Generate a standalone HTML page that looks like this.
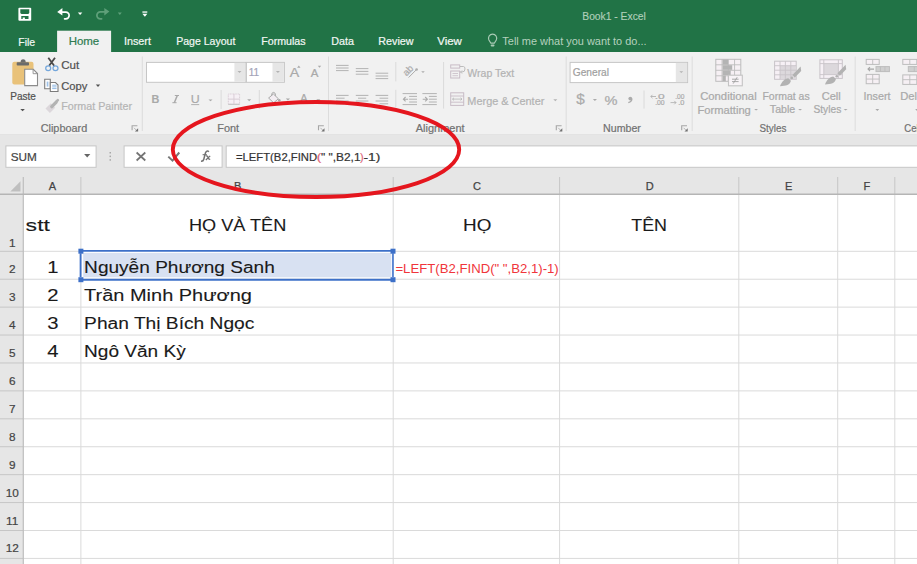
<!DOCTYPE html>
<html><head><meta charset="utf-8"><style>
html,body{margin:0;padding:0;width:917px;height:564px;overflow:hidden;background:#fff}
svg{display:block}
text{font-family:"Liberation Sans",sans-serif;white-space:pre}
</style></head><body>
<svg width="917" height="564" viewBox="0 0 917 564">
<rect x="0" y="0" width="917" height="52" fill="#217346" />
<rect x="57.1" y="30.7" width="54" height="21.3" fill="#f1f1f1" />
<text x="582.28" y="19.5" font-size="11.6" fill="#b0cfba" font-weight="normal" textLength="63.54" lengthAdjust="spacingAndGlyphs" stroke="#b0cfba" stroke-width="0.15" >Book1 - Excel</text>
<text x="18.25" y="46.0" font-size="10.9" fill="#f2f7f4" font-weight="normal" textLength="16.91" lengthAdjust="spacingAndGlyphs" stroke="#f2f7f4" stroke-width="0.2" >File</text>
<text x="123.95" y="44.7" font-size="10.9" fill="#f2f7f4" font-weight="normal" textLength="27.01" lengthAdjust="spacingAndGlyphs" stroke="#f2f7f4" stroke-width="0.2" >Insert</text>
<text x="176.15" y="44.7" font-size="10.9" fill="#f2f7f4" font-weight="normal" textLength="59.21" lengthAdjust="spacingAndGlyphs" stroke="#f2f7f4" stroke-width="0.2" >Page Layout</text>
<text x="261.25" y="44.7" font-size="10.9" fill="#f2f7f4" font-weight="normal" textLength="44.31" lengthAdjust="spacingAndGlyphs" stroke="#f2f7f4" stroke-width="0.2" >Formulas</text>
<text x="331.25" y="44.7" font-size="10.9" fill="#f2f7f4" font-weight="normal" textLength="22.71" lengthAdjust="spacingAndGlyphs" stroke="#f2f7f4" stroke-width="0.2" >Data</text>
<text x="378.35" y="44.7" font-size="10.9" fill="#f2f7f4" font-weight="normal" textLength="35.21" lengthAdjust="spacingAndGlyphs" stroke="#f2f7f4" stroke-width="0.2" >Review</text>
<text x="437.25" y="44.7" font-size="10.9" fill="#f2f7f4" font-weight="normal" textLength="24.61" lengthAdjust="spacingAndGlyphs" stroke="#f2f7f4" stroke-width="0.2" >View</text>
<text x="68.65" y="44.7" font-size="10.9" fill="#2f7c51" font-weight="normal" textLength="30.61" lengthAdjust="spacingAndGlyphs" stroke="#2f7c51" stroke-width="0.2" >Home</text>
<text x="502.35" y="44.7" font-size="10.9" fill="#b5d1be" font-weight="normal" textLength="144.21" lengthAdjust="spacingAndGlyphs" >Tell me what you want to do...</text>
<path d="M490.9,43.2 L488.9,40 A4.1,4.1 0 1 1 496.3,40 L494.3,43.2 Z" fill="none" stroke="#a9cbb5" stroke-width="1.2" stroke-linejoin="round"/>
<rect x="490.7" y="44.5" width="3.8" height="1.9" fill="#a9cbb5" rx="0.8"/>
<path d="M18.4,8.7 Q18.4,7.7 19.4,7.7 H30.2 Q31.2,7.7 31.2,8.7 V19.7 Q31.2,20.7 30.2,20.7 H19.4 Q18.4,20.7 18.4,19.7 Z" fill="#ffffff" stroke="none" stroke-width="1" />
<path d="M20.3,9.3 H29.3 V12.6 Q29.3,13.9 28,13.9 H21.6 Q20.3,13.9 20.3,12.6 Z" fill="#217346" stroke="none" stroke-width="1" />
<path d="M21.3,16.1 H28.5 V19.1 H24.9 V17.6 H22.7 V19.1 H21.3 Z" fill="#217346" stroke="none" stroke-width="1" />
<path d="M57.2,11.9 L62.4,7.9 L62.4,15.6 Z" fill="#ffffff" stroke="none" stroke-width="1" />
<path d="M61.5,12.1 H65.8 A3.35,3.35 0 0 1 65.8,18.8 H64.6" fill="none" stroke="#ffffff" stroke-width="1.7" stroke-linecap="round"/>
<path d="M77.89999999999999,12.4 L82.3,12.4 L80.1,14.9 Z" fill="#ffffff" stroke="none" stroke-width="1" />
<path d="M109.4,11.6 L104.3,8.1 L104.3,15.4 Z" fill="#5fa07a" stroke="none" stroke-width="1" />
<path d="M105,11.8 H100.4 A3.5,3.5 0 0 0 100.4,18.8 H101.6" fill="none" stroke="#5fa07a" stroke-width="1.8" stroke-linecap="round"/>
<path d="M117.8,12.6 L121.8,12.6 L119.8,14.899999999999999 Z" fill="#5fa07a" stroke="none" stroke-width="1" />
<rect x="142.4" y="11.4" width="4.9" height="1.3" fill="#ffffff" />
<path d="M142.35,13.8 L147.35,13.8 L144.85,16.8 Z" fill="#ffffff" stroke="none" stroke-width="1" />
<rect x="0" y="52" width="917" height="82.5" fill="#f1f1f1" />
<line x1="0" y1="135" x2="917" y2="135" stroke="#dcdcdc" stroke-width="1.6" />
<line x1="142.3" y1="56.5" x2="142.3" y2="131" stroke="#dcdcdc" stroke-width="1" />
<line x1="328.5" y1="56.5" x2="328.5" y2="131" stroke="#dcdcdc" stroke-width="1" />
<line x1="566.2" y1="56.5" x2="566.2" y2="131" stroke="#dcdcdc" stroke-width="1" />
<line x1="692.2" y1="56.5" x2="692.2" y2="131" stroke="#dcdcdc" stroke-width="1" />
<line x1="855.2" y1="56.5" x2="855.2" y2="131" stroke="#dcdcdc" stroke-width="1" />
<text x="40.66" y="131.6" font-size="10.9" fill="#727272" font-weight="normal" textLength="46.59" lengthAdjust="spacingAndGlyphs" stroke="#727272" stroke-width="0.22" >Clipboard</text>
<text x="217.36" y="131.6" font-size="10.9" fill="#727272" font-weight="normal" textLength="21.79" lengthAdjust="spacingAndGlyphs" stroke="#727272" stroke-width="0.22" >Font</text>
<text x="415.76" y="131.6" font-size="10.9" fill="#727272" font-weight="normal" textLength="48.79" lengthAdjust="spacingAndGlyphs" stroke="#727272" stroke-width="0.22" >Alignment</text>
<text x="603.06" y="131.6" font-size="10.9" fill="#727272" font-weight="normal" textLength="37.79" lengthAdjust="spacingAndGlyphs" stroke="#727272" stroke-width="0.22" >Number</text>
<text x="759.46" y="131.6" font-size="10.9" fill="#727272" font-weight="normal" textLength="26.89" lengthAdjust="spacingAndGlyphs" stroke="#727272" stroke-width="0.22" >Styles</text>
<text x="904.26" y="131.6" font-size="10.9" fill="#727272" font-weight="normal" textLength="21.29" lengthAdjust="spacingAndGlyphs" stroke="#727272" stroke-width="0.22" >Cells</text>
<path d="M132.1,130.2 V125.7 H137.4" fill="none" stroke="#a6a6a6" stroke-width="1.1" />
<path d="M134.0,127.8 L136.2,130.0" fill="none" stroke="#b0b0b0" stroke-width="0.9" />
<path d="M134.9,131.4 L138.1,131.4 L138.1,128.2 Z" fill="#707070" stroke="none" stroke-width="1" />
<path d="M318.5,130.2 V125.7 H323.8" fill="none" stroke="#a6a6a6" stroke-width="1.1" />
<path d="M320.4,127.8 L322.6,130.0" fill="none" stroke="#b0b0b0" stroke-width="0.9" />
<path d="M321.3,131.4 L324.5,131.4 L324.5,128.2 Z" fill="#707070" stroke="none" stroke-width="1" />
<path d="M556.3,130.2 V125.7 H561.5999999999999" fill="none" stroke="#a6a6a6" stroke-width="1.1" />
<path d="M558.1999999999999,127.8 L560.4,130.0" fill="none" stroke="#b0b0b0" stroke-width="0.9" />
<path d="M559.0999999999999,131.4 L562.3,131.4 L562.3,128.2 Z" fill="#707070" stroke="none" stroke-width="1" />
<path d="M681.7,130.2 V125.7 H687.0" fill="none" stroke="#a6a6a6" stroke-width="1.1" />
<path d="M683.6,127.8 L685.8000000000001,130.0" fill="none" stroke="#b0b0b0" stroke-width="0.9" />
<path d="M684.5,131.4 L687.7,131.4 L687.7,128.2 Z" fill="#707070" stroke="none" stroke-width="1" />
<path d="M12.3,63.8 Q12.3,61.8 14.3,61.8 H31.5 Q33.5,61.8 33.5,63.8 V82.4 Q33.5,84.4 31.5,84.4 H14.3 Q12.3,84.4 12.3,82.4 Z" fill="#e9c27a" stroke="none" stroke-width="1" />
<rect x="16.7" y="62.2" width="12.3" height="3.3" fill="#6b6b6b" rx="0.8"/>
<path d="M20.6,62.5 Q20.6,59.3 23.1,59.3 Q25.7,59.3 25.7,62.5 Z" fill="#6b6b6b" stroke="none" stroke-width="1" />
<path d="M24.7,69.3 H33.3 L37.5,73.5 V85.6 H24.7 Z" fill="#ffffff" stroke="#8c8c8c" stroke-width="1.1" />
<path d="M33.1,69.3 V73.7 H37.5" fill="none" stroke="#8c8c8c" stroke-width="0.9" />
<text x="10.26" y="99.8" font-size="10.9" fill="#525252" font-weight="normal" textLength="25.69" lengthAdjust="spacingAndGlyphs" stroke="#525252" stroke-width="0.22" >Paste</text>
<path d="M20.3,108.9 L24.900000000000002,108.9 L22.6,111.2 Z" fill="#525252" stroke="none" stroke-width="1" />
<path d="M48.3,57.8 L54.2,65.8 M55,57.8 L49.1,65.8" fill="none" stroke="#4a4a4a" stroke-width="1.8" />
<ellipse cx="48.2" cy="68.2" rx="2.5" ry="2.35" fill="none" stroke="#74a7dc" stroke-width="1.25"/>
<ellipse cx="55.5" cy="68.2" rx="2.5" ry="2.35" fill="none" stroke="#74a7dc" stroke-width="1.25"/>
<text x="61.26" y="69.4" font-size="10.9" fill="#525252" font-weight="normal" textLength="17.99" lengthAdjust="spacingAndGlyphs" stroke="#525252" stroke-width="0.22" >Cut</text>
<path d="M44.7,79.3 H50.3 V88.7 H44.7 Z" fill="#ffffff" stroke="#7c7c7c" stroke-width="1.1" />
<rect x="46.7" y="81.6" width="1.7" height="5" fill="#9fc2e8" />
<path d="M50.3,82.5 H55.5 L58,85 V91.5 H50.3 Z" fill="#ffffff" stroke="#7c7c7c" stroke-width="1.1" />
<path d="M52.2,85.2 H56.6 M52.2,86.9 H56.6 M52.2,88.6 H56.6" fill="none" stroke="#93bae4" stroke-width="1.0" />
<text x="61.26" y="89.7" font-size="10.9" fill="#525252" font-weight="normal" textLength="26.19" lengthAdjust="spacingAndGlyphs" stroke="#525252" stroke-width="0.22" >Copy</text>
<path d="M95.8,84.5 L100.2,84.5 L98,87.0 Z" fill="#525252" stroke="none" stroke-width="1" />
<path d="M45.5,108.6 L50.8,103.3 L55.2,107.7 L49.9,112.9 Z" fill="#dcd7db" stroke="none" stroke-width="1" />
<path d="M51.8,106.6 L56,102.4" fill="none" stroke="#b3b3b3" stroke-width="3.4" stroke-linecap="round"/>
<path d="M56.6,101.4 L57.8,100.2" fill="none" stroke="#b3b3b3" stroke-width="2.6" stroke-linecap="round"/>
<text x="61.26" y="110.1" font-size="10.9" fill="#b5b5b5" font-weight="normal" textLength="70.89" lengthAdjust="spacingAndGlyphs" stroke="#b5b5b5" stroke-width="0.22" >Format Painter</text>
<rect x="146.5" y="62.4" width="99.3" height="19.9" fill="#ffffff" stroke="#c6c6c6" stroke-width="1"/>
<rect x="234.4" y="62.9" width="11" height="18.9" fill="#e6e6e6" />
<path d="M237.5,71.1 L241.5,71.1 L239.5,72.89999999999999 Z" fill="#b3b3b3" stroke="none" stroke-width="1" />
<rect x="246.4" y="62.4" width="38" height="19.9" fill="#ffffff" stroke="#c6c6c6" stroke-width="1"/>
<rect x="272.5" y="62.9" width="11.4" height="18.9" fill="#e6e6e6" />
<path d="M275.9,71.1 L279.9,71.1 L277.9,72.89999999999999 Z" fill="#b3b3b3" stroke="none" stroke-width="1" />
<text x="248.76" y="76.1" font-size="10.9" fill="#a3a3b8" font-weight="normal" textLength="10.39" lengthAdjust="spacingAndGlyphs" stroke="#a3a3b8" stroke-width="0.22" >11</text>
<text x="289.87" y="77.1" font-size="12.3" fill="#a9a9a9" font-weight="normal" textLength="9.46" lengthAdjust="spacingAndGlyphs" stroke="#a9a9a9" stroke-width="0.22" >A</text>
<path d="M297.1,67.8 L300.5,67.8 L298.8,65.6 Z" fill="#a9a9a9" stroke="none" stroke-width="1" />
<text x="310.68" y="77.1" font-size="10.5" fill="#a9a9a9" font-weight="normal" textLength="7.64" lengthAdjust="spacingAndGlyphs" stroke="#a9a9a9" stroke-width="0.22" >A</text>
<path d="M317.8,65.8 L321.2,65.8 L319.5,67.8 Z" fill="#a9a9a9" stroke="none" stroke-width="1" />
<text x="151.48" y="103.2" font-size="11.2" fill="#a9a9a9" font-weight="bold" textLength="7.84" lengthAdjust="spacingAndGlyphs" stroke="#a9a9a9" stroke-width="0.1" >B</text>
<path d="M174.8,95.5 H179 M172.4,102.7 H176.6" fill="none" stroke="#a9a9a9" stroke-width="1.0" />
<path d="M177.3,95.5 L174.3,102.7" fill="none" stroke="#a9a9a9" stroke-width="1.5" />
<text x="190.83" y="102.9" font-size="10.8" fill="#a9a9a9" font-weight="normal" textLength="8.95" lengthAdjust="spacingAndGlyphs" stroke="#a9a9a9" stroke-width="0.15" >U</text>
<line x1="191.2" y1="104.6" x2="199.2" y2="104.6" stroke="#a9a9a9" stroke-width="0.9" />
<path d="M208.5,99.4 L212.5,99.4 L210.5,101.30000000000001 Z" fill="#a9a9a9" stroke="none" stroke-width="1" />
<line x1="221.1" y1="90" x2="221.1" y2="109" stroke="#dadada" stroke-width="1" />
<rect x="228.3" y="94" width="11.3" height="10.3" fill="#f6f0f5" stroke="#d9cdd6" stroke-width="1" stroke-dasharray="1 0.6"/>
<line x1="228.3" y1="104.3" x2="239.6" y2="104.3" stroke="#c4c4c4" stroke-width="1.1" />
<line x1="233.95" y1="94" x2="233.95" y2="104.3" stroke="#d9cdd6" stroke-width="1" />
<line x1="228.3" y1="99.15" x2="239.6" y2="99.15" stroke="#d9cdd6" stroke-width="1" />
<path d="M247.2,99.3 L251.2,99.3 L249.2,101.2 Z" fill="#a9a9a9" stroke="none" stroke-width="1" />
<line x1="259.3" y1="90" x2="259.3" y2="109" stroke="#dadada" stroke-width="1" />
<path d="M268.6,98 L273.4,94 L278.4,98.8 L273.6,102.8 Z" fill="#f4eef3" stroke="#a9a9a9" stroke-width="1" />
<path d="M271.6,95.6 Q271.4,92.4 273.6,92.4 Q275.6,92.4 275.6,95.8" fill="none" stroke="#a9a9a9" stroke-width="1" />
<circle cx="279.3" cy="100.2" r="1.3" fill="#a9a9a9"/>
<path d="M285.79999999999995,98.6 L290.0,98.6 L287.9,100.5 Z" fill="#a9a9a9" stroke="none" stroke-width="1" />
<text x="300.27" y="101.6" font-size="10.6" fill="#a9a9a9" font-weight="normal" textLength="7.25" lengthAdjust="spacingAndGlyphs" stroke="#a9a9a9" stroke-width="0.22" >A</text>
<path d="M316.3,99.3 L320.3,99.3 L318.3,101.2 Z" fill="#a9a9a9" stroke="none" stroke-width="1" />
<line x1="336" y1="65.4" x2="348.6" y2="65.4" stroke="#ababab" stroke-width="0.9" />
<line x1="336" y1="68" x2="348.6" y2="68" stroke="#ababab" stroke-width="0.9" />
<line x1="336" y1="70.6" x2="348.6" y2="70.6" stroke="#ababab" stroke-width="0.9" />
<line x1="355.8" y1="68.6" x2="368.4" y2="68.6" stroke="#ababab" stroke-width="0.9" />
<line x1="355.8" y1="71.4" x2="368.4" y2="71.4" stroke="#ababab" stroke-width="0.9" />
<line x1="355.8" y1="74.2" x2="368.4" y2="74.2" stroke="#ababab" stroke-width="0.9" />
<line x1="375.6" y1="73.2" x2="388.2" y2="73.2" stroke="#ababab" stroke-width="0.9" />
<line x1="375.6" y1="76" x2="388.2" y2="76" stroke="#ababab" stroke-width="0.9" />
<line x1="375.6" y1="78.6" x2="388.2" y2="78.6" stroke="#ababab" stroke-width="0.9" />
<line x1="395.8" y1="62" x2="395.8" y2="81.4" stroke="#dadada" stroke-width="1" />
<text x="408" y="73.6" font-size="9.6" fill="#ababab" stroke="#ababab" stroke-width="0.2" text-anchor="middle" transform="rotate(-45 408 70.4)">ab</text>
<line x1="408.6" y1="77.5" x2="416.2" y2="69.9" stroke="#ababab" stroke-width="1.0" />
<circle cx="416.6" cy="69.5" r="1.3" fill="#ababab"/>
<path d="M421.2,71.2 L424.8,71.2 L423,73.0 Z" fill="#ababab" stroke="none" stroke-width="1" />
<line x1="443.6" y1="62" x2="443.6" y2="108.6" stroke="#dadada" stroke-width="1" />
<line x1="336" y1="95.4" x2="348.6" y2="95.4" stroke="#ababab" stroke-width="0.9" />
<line x1="355.8" y1="95.4" x2="368.4" y2="95.4" stroke="#ababab" stroke-width="0.9" />
<line x1="375.6" y1="95.4" x2="388.2" y2="95.4" stroke="#ababab" stroke-width="0.9" />
<line x1="336" y1="98.2" x2="344.6" y2="98.2" stroke="#ababab" stroke-width="0.9" />
<line x1="358" y1="98.2" x2="366.2" y2="98.2" stroke="#ababab" stroke-width="0.9" />
<line x1="379.6" y1="98.2" x2="388.2" y2="98.2" stroke="#ababab" stroke-width="0.9" />
<line x1="336" y1="101" x2="348.6" y2="101" stroke="#ababab" stroke-width="0.9" />
<line x1="355.8" y1="101" x2="368.4" y2="101" stroke="#ababab" stroke-width="0.9" />
<line x1="375.6" y1="101" x2="388.2" y2="101" stroke="#ababab" stroke-width="0.9" />
<line x1="336" y1="103.8" x2="344.6" y2="103.8" stroke="#ababab" stroke-width="0.9" />
<line x1="358" y1="103.8" x2="366.2" y2="103.8" stroke="#ababab" stroke-width="0.9" />
<line x1="379.6" y1="103.8" x2="388.2" y2="103.8" stroke="#ababab" stroke-width="0.9" />
<line x1="395.8" y1="89.8" x2="395.8" y2="107.2" stroke="#dadada" stroke-width="1" />
<line x1="402.6" y1="93.6" x2="417.0" y2="93.6" stroke="#ababab" stroke-width="0.9" />
<line x1="402.6" y1="104.6" x2="417.0" y2="104.6" stroke="#ababab" stroke-width="0.9" />
<line x1="409.1" y1="96.4" x2="417.0" y2="96.4" stroke="#ababab" stroke-width="0.9" />
<line x1="409.1" y1="99.2" x2="417.0" y2="99.2" stroke="#ababab" stroke-width="0.9" />
<line x1="409.1" y1="102" x2="417.0" y2="102" stroke="#ababab" stroke-width="0.9" />
<path d="M408.1,99.2 H403.40000000000003 M405.6,97 L403.40000000000003,99.2 L405.6,101.4" fill="none" stroke="#ababab" stroke-width="1.1" />
<line x1="422.4" y1="93.6" x2="436.79999999999995" y2="93.6" stroke="#ababab" stroke-width="0.9" />
<line x1="422.4" y1="104.6" x2="436.79999999999995" y2="104.6" stroke="#ababab" stroke-width="0.9" />
<line x1="428.9" y1="96.4" x2="436.79999999999995" y2="96.4" stroke="#ababab" stroke-width="0.9" />
<line x1="428.9" y1="99.2" x2="436.79999999999995" y2="99.2" stroke="#ababab" stroke-width="0.9" />
<line x1="428.9" y1="102" x2="436.79999999999995" y2="102" stroke="#ababab" stroke-width="0.9" />
<path d="M422.7,99.2 H427.4 M425.2,97 L427.4,99.2 L425.2,101.4" fill="none" stroke="#ababab" stroke-width="1.1" />
<rect x="450.7" y="64.9" width="9" height="3.2" fill="none" stroke="#c8bcc6" stroke-width="1"/>
<rect x="450.7" y="71" width="9" height="7" fill="none" stroke="#c8bcc6" stroke-width="1"/>
<line x1="452.5" y1="73.5" x2="458" y2="73.5" stroke="#c8bcc6" stroke-width="0.8" />
<line x1="452.5" y1="75.7" x2="458" y2="75.7" stroke="#c8bcc6" stroke-width="0.8" />
<path d="M460,66.5 H463.5 Q465,66.5 465,69 Q465,72 462,72 H460.5 M462,70.5 L460.5,72 L462,73.5" fill="none" stroke="#b5b5b5" stroke-width="0.9" />
<text x="467.36" y="76.6" font-size="10.9" fill="#b3b3b3" font-weight="normal" textLength="46.89" lengthAdjust="spacingAndGlyphs" stroke="#b3b3b3" stroke-width="0.22" >Wrap Text</text>
<rect x="450.7" y="92.8" width="13" height="12.6" fill="none" stroke="#c8bcc6" stroke-width="1"/>
<line x1="450.7" y1="96" x2="463.7" y2="96" stroke="#c8bcc6" stroke-width="0.9" />
<line x1="450.7" y1="102.2" x2="463.7" y2="102.2" stroke="#c8bcc6" stroke-width="0.9" />
<path d="M452.5,99.1 H462 M454,97.8 L452.5,99.1 L454,100.4 M460.5,97.8 L462,99.1 L460.5,100.4" fill="none" stroke="#b5b5b5" stroke-width="0.8" />
<text x="467.36" y="104.5" font-size="10.9" fill="#b3b3b3" font-weight="normal" textLength="76.99" lengthAdjust="spacingAndGlyphs" stroke="#b3b3b3" stroke-width="0.22" >Merge &amp; Center</text>
<path d="M553.3,99.3 L557.3,99.3 L555.3,101.2 Z" fill="#b3b3b3" stroke="none" stroke-width="1" />
<rect x="570.1" y="62.4" width="117.5" height="20.2" fill="#ffffff" stroke="#c6c6c6" stroke-width="1"/>
<rect x="675.8" y="62.9" width="11.3" height="19.2" fill="#e6e6e6" />
<path d="M679.4,71.3 L683.1999999999999,71.3 L681.3,72.89999999999999 Z" fill="#b3b3b3" stroke="none" stroke-width="1" />
<text x="572.76" y="76.4" font-size="10.9" fill="#a0a0a0" font-weight="normal" textLength="36.19" lengthAdjust="spacingAndGlyphs" stroke="#a0a0a0" stroke-width="0.22" >General</text>
<text x="576.24" y="104.2" font-size="14.5" fill="#ababab" font-weight="normal" textLength="8.52" lengthAdjust="spacingAndGlyphs" stroke="#ababab" stroke-width="0.22" >$</text>
<path d="M592.8,98.9 L597.0,98.9 L594.9,100.9 Z" fill="#ababab" stroke="none" stroke-width="1" />
<text x="604.46" y="105.1" font-size="12.5" fill="#ababab" font-weight="normal" textLength="12.98" lengthAdjust="spacingAndGlyphs" stroke="#ababab" stroke-width="0.22" >%</text>
<circle cx="630.3" cy="98.6" r="1.9" fill="#ababab"/>
<path d="M631.9,98.8 Q632,101.6 628.3,102.6" fill="none" stroke="#ababab" stroke-width="1.3" />
<line x1="644" y1="90.5" x2="644" y2="108.6" stroke="#dadada" stroke-width="1" />
<text x="654.66" y="98.8" font-size="7.5" fill="#ababab" font-weight="normal" textLength="9.98" lengthAdjust="spacingAndGlyphs" stroke="#ababab" stroke-width="0.22" >.0</text>
<text x="655.16" y="105" font-size="7.5" fill="#ababab" font-weight="normal" textLength="9.48" lengthAdjust="spacingAndGlyphs" stroke="#ababab" stroke-width="0.22" >.00</text>
<path d="M656,96.5 H650.8 M652.5,94.8 L650.8,96.5 L652.5,98.2" fill="none" stroke="#ababab" stroke-width="0.8" />
<text x="675.16" y="98.8" font-size="7.5" fill="#ababab" font-weight="normal" textLength="9.18" lengthAdjust="spacingAndGlyphs" stroke="#ababab" stroke-width="0.22" >.00</text>
<text x="678.16" y="105" font-size="7.5" fill="#ababab" font-weight="normal" textLength="6.18" lengthAdjust="spacingAndGlyphs" stroke="#ababab" stroke-width="0.22" >.0</text>
<path d="M670.5,102.6 H676 M674.3,100.9 L676,102.6 L674.3,104.3" fill="none" stroke="#ababab" stroke-width="0.8" />
<rect x="715.8" y="59.3" width="25" height="22" fill="#f6f0f4" stroke="#bdbdbd" stroke-width="1"/>
<line x1="722.05" y1="59.3" x2="722.05" y2="81.3" stroke="#bdbdbd" stroke-width="0.9" />
<line x1="728.3" y1="59.3" x2="728.3" y2="81.3" stroke="#bdbdbd" stroke-width="0.9" />
<line x1="734.55" y1="59.3" x2="734.55" y2="81.3" stroke="#bdbdbd" stroke-width="0.9" />
<line x1="715.8" y1="64.8" x2="740.8" y2="64.8" stroke="#bdbdbd" stroke-width="0.9" />
<line x1="715.8" y1="70.3" x2="740.8" y2="70.3" stroke="#bdbdbd" stroke-width="0.9" />
<line x1="715.8" y1="75.8" x2="740.8" y2="75.8" stroke="#bdbdbd" stroke-width="0.9" />
<rect x="722.6" y="59.5" width="5.6" height="5.2" fill="#b4b4b4" />
<rect x="722.6" y="65.2" width="9.6" height="4.6" fill="#b4b4b4" />
<rect x="722.6" y="70.4" width="8.1" height="4.7" fill="#b4b4b4" />
<rect x="722.6" y="75.5" width="3.2" height="5.7" fill="#b4b4b4" />
<rect x="728.5" y="75.2" width="13.8" height="10.6" fill="#f8f4f7" stroke="#c4c4c4" stroke-width="1.1"/>
<path d="M732,79.2 H738.6 M732,81.6 H738.6 M737.2,77.2 L733.2,83.6" fill="none" stroke="#a0a0a0" stroke-width="0.9" />
<text x="700.16" y="99.8" font-size="10.9" fill="#a9a9a9" font-weight="normal" textLength="56.49" lengthAdjust="spacingAndGlyphs" stroke="#a9a9a9" stroke-width="0.22" >Conditional</text>
<text x="697.46" y="113.9" font-size="10.9" fill="#a9a9a9" font-weight="normal" textLength="53.39" lengthAdjust="spacingAndGlyphs" stroke="#a9a9a9" stroke-width="0.22" >Formatting</text>
<path d="M754.2,108.9 L758.0,108.9 L756.1,110.5 Z" fill="#a9a9a9" stroke="none" stroke-width="1" />
<rect x="774.6" y="61.2" width="21.6" height="18.1" fill="#f6f0f5" stroke="#c8c4c8" stroke-width="1"/>
<rect x="780" y="65.7" width="16.2" height="13.6" fill="#dcd8dc" />
<line x1="780" y1="61.2" x2="780" y2="79.3" stroke="#c8c4c8" stroke-width="0.9" />
<line x1="785.4" y1="61.2" x2="785.4" y2="79.3" stroke="#c8c4c8" stroke-width="0.9" />
<line x1="790.8" y1="61.2" x2="790.8" y2="79.3" stroke="#c8c4c8" stroke-width="0.9" />
<line x1="774.6" y1="65.7" x2="796.2" y2="65.7" stroke="#c8c4c8" stroke-width="0.9" />
<line x1="774.6" y1="70.2" x2="796.2" y2="70.2" stroke="#c8c4c8" stroke-width="0.9" />
<line x1="774.6" y1="74.8" x2="796.2" y2="74.8" stroke="#c8c4c8" stroke-width="0.9" />
<g transform="translate(0,0)">
<path d="M800.6,66.4 L801.2,71 L794.8,77.4 L792.4,75 Z" fill="#b2b2b2" stroke="none" stroke-width="1" />
<circle cx="791.8" cy="77.9" r="1.3" fill="#b2b2b2"/>
<path d="M780,86.2 C781.6,81.6 784.6,78.8 788.3,78.2 L790.9,80.8 C790.4,84.6 785.8,86.2 780,86.2 Z" fill="#b2b2b2" stroke="none" stroke-width="1" />
</g>
<text x="762.46" y="99.7" font-size="10.9" fill="#a9a9a9" font-weight="normal" textLength="47.19" lengthAdjust="spacingAndGlyphs" stroke="#a9a9a9" stroke-width="0.22" >Format as</text>
<text x="769.86" y="113.4" font-size="10.9" fill="#a9a9a9" font-weight="normal" textLength="25.39" lengthAdjust="spacingAndGlyphs" stroke="#a9a9a9" stroke-width="0.22" >Table</text>
<path d="M798.2,108.9 L802.0,108.9 L800.1,110.5 Z" fill="#a9a9a9" stroke="none" stroke-width="1" />
<rect x="819.9" y="59.8" width="22.4" height="18.6" fill="#f6f0f5" stroke="#c8c4c8" stroke-width="1"/>
<rect x="823.8" y="63.6" width="14.6" height="11" fill="#dcd8dc" />
<line x1="823.8" y1="59.8" x2="823.8" y2="78.4" stroke="#c8c4c8" stroke-width="0.9" />
<line x1="838.4" y1="59.8" x2="838.4" y2="78.4" stroke="#c8c4c8" stroke-width="0.9" />
<line x1="819.9" y1="63.6" x2="842.3" y2="63.6" stroke="#c8c4c8" stroke-width="0.9" />
<line x1="819.9" y1="74.6" x2="842.3" y2="74.6" stroke="#c8c4c8" stroke-width="0.9" />
<g transform="translate(45,-1.7)">
<path d="M800.6,66.4 L801.2,71 L794.8,77.4 L792.4,75 Z" fill="#b2b2b2" stroke="none" stroke-width="1" />
<circle cx="791.8" cy="77.9" r="1.3" fill="#b2b2b2"/>
<path d="M780,86.2 C781.6,81.6 784.6,78.8 788.3,78.2 L790.9,80.8 C790.4,84.6 785.8,86.2 780,86.2 Z" fill="#b2b2b2" stroke="none" stroke-width="1" />
</g>
<text x="821.66" y="99.7" font-size="10.9" fill="#a9a9a9" font-weight="normal" textLength="19.09" lengthAdjust="spacingAndGlyphs" stroke="#a9a9a9" stroke-width="0.22" >Cell</text>
<text x="813.46" y="113.4" font-size="10.9" fill="#a9a9a9" font-weight="normal" textLength="27.79" lengthAdjust="spacingAndGlyphs" stroke="#a9a9a9" stroke-width="0.22" >Styles</text>
<path d="M843.6,108.9 L847.6,108.9 L845.6,110.5 Z" fill="#a9a9a9" stroke="none" stroke-width="1" />
<rect x="866.2" y="59.4" width="13" height="5" fill="#f6f0f4" stroke="#bdbdbd" stroke-width="1"/>
<line x1="872.7" y1="59.4" x2="872.7" y2="64.4" stroke="#bdbdbd" stroke-width="0.9" />
<rect x="876" y="66.6" width="13.4" height="5" fill="#cfcfcf" stroke="#bdbdbd" stroke-width="1"/>
<line x1="880.4666666666667" y1="66.6" x2="880.4666666666667" y2="71.6" stroke="#bdbdbd" stroke-width="0.9" />
<line x1="884.9333333333333" y1="66.6" x2="884.9333333333333" y2="71.6" stroke="#bdbdbd" stroke-width="0.9" />
<path d="M874,69.1 H868 M870,67.1 L868,69.1 L870,71.1" fill="none" stroke="#a6a6a6" stroke-width="1.1" />
<rect x="866.2" y="74.4" width="13" height="9.3" fill="#f6f0f4" stroke="#bdbdbd" stroke-width="1"/>
<line x1="872.7" y1="74.4" x2="872.7" y2="83.7" stroke="#bdbdbd" stroke-width="0.9" />
<line x1="866.2" y1="79.05000000000001" x2="879.2" y2="79.05000000000001" stroke="#bdbdbd" stroke-width="0.9" />
<text x="863.56" y="99.9" font-size="10.9" fill="#a9a9a9" font-weight="normal" textLength="26.99" lengthAdjust="spacingAndGlyphs" stroke="#a9a9a9" stroke-width="0.22" >Insert</text>
<path d="M875.4,109.1 L879.1999999999999,109.1 L877.3,110.89999999999999 Z" fill="#a9a9a9" stroke="none" stroke-width="1" />
<rect x="902.8" y="59.4" width="14" height="5" fill="#f6f0f4" stroke="#bdbdbd" stroke-width="1"/>
<line x1="909.8" y1="59.4" x2="909.8" y2="64.4" stroke="#bdbdbd" stroke-width="0.9" />
<rect x="908.3" y="66.6" width="12" height="5" fill="#cfcfcf" stroke="#bdbdbd" stroke-width="1"/>
<line x1="914.3" y1="66.6" x2="914.3" y2="71.6" stroke="#bdbdbd" stroke-width="0.9" />
<rect x="902.8" y="74.9" width="14" height="9.5" fill="#f6f0f4" stroke="#bdbdbd" stroke-width="1"/>
<line x1="909.8" y1="74.9" x2="909.8" y2="84.4" stroke="#bdbdbd" stroke-width="0.9" />
<line x1="902.8" y1="79.65" x2="916.8" y2="79.65" stroke="#bdbdbd" stroke-width="0.9" />
<text x="900.16" y="99.9" font-size="10.9" fill="#a9a9a9" font-weight="normal" textLength="32.39" lengthAdjust="spacingAndGlyphs" stroke="#a9a9a9" stroke-width="0.22" >Delete</text>
<path d="M915.1,109.1 L918.9,109.1 L917,110.89999999999999 Z" fill="#a9a9a9" stroke="none" stroke-width="1" />
<rect x="0" y="135" width="917" height="59" fill="#e6e6e6" />
<rect x="5.9" y="145.9" width="90.2" height="21.4" fill="#ffffff" stroke="#c6c6c6" stroke-width="1"/>
<text x="10.70" y="161.1" font-size="11.6" fill="#444444" font-weight="normal" textLength="26.09" lengthAdjust="spacingAndGlyphs" stroke="#444444" stroke-width="0.2" >SUM</text>
<path d="M84.10000000000001,153.9 L90.3,153.9 L87.2,157.5 Z" fill="#656565" stroke="none" stroke-width="1" />
<rect x="109.5" y="152.0" width="1.5" height="1.5" fill="#a8a8a8" />
<rect x="109.5" y="155.6" width="1.5" height="1.5" fill="#a8a8a8" />
<rect x="109.5" y="159.2" width="1.5" height="1.5" fill="#a8a8a8" />
<rect x="124.1" y="145.9" width="98" height="21.4" fill="#ffffff" stroke="#c6c6c6" stroke-width="1"/>
<path d="M136.6,152.5 L145.3,160.5 M145.3,152.5 L136.6,160.5" fill="none" stroke="#747474" stroke-width="1.7" />
<path d="M168.3,156.6 L172.5,160.6 L179.3,152.5" fill="none" stroke="#787878" stroke-width="2.0" />
<path d="M208.9,151.8 Q207.8,150.6 206.5,151.3 Q205.5,151.9 205,154.5 L203.8,159.2 Q203.2,161.4 201,161.1" fill="none" stroke="#727272" stroke-width="1.5" />
<path d="M202.6,154.7 H206.9" fill="none" stroke="#727272" stroke-width="1.1" />
<path d="M205.9,156 Q207.5,155.5 208,157.5 Q208.6,159.6 210.2,159.4 M210.2,155.9 L205.8,160" fill="none" stroke="#727272" stroke-width="1.25" />
<rect x="226.2" y="145.9" width="700" height="21.4" fill="#ffffff" stroke="#c6c6c6" stroke-width="1"/>
<text x="236.03" y="160.7" font-size="11.2" fill="#333333" font-weight="normal" textLength="81.04" lengthAdjust="spacingAndGlyphs" stroke="#333333" stroke-width="0.2" >=LEFT(B2,FIND</text>
<text x="316.73" y="160.7" font-size="11.2" fill="#e06478" font-weight="normal" textLength="4.64" lengthAdjust="spacingAndGlyphs" stroke="#e06478" stroke-width="0.2" >(</text>
<text x="321.03" y="160.7" font-size="11.2" fill="#333333" font-weight="normal" textLength="39.54" lengthAdjust="spacingAndGlyphs" stroke="#333333" stroke-width="0.2" >" ",B2,1</text>
<text x="359.93" y="160.7" font-size="11.2" fill="#e06478" font-weight="normal" textLength="3.64" lengthAdjust="spacingAndGlyphs" stroke="#e06478" stroke-width="0.2" >)</text>
<text x="363.43" y="160.7" font-size="11.2" fill="#333333" font-weight="normal" textLength="16.84" lengthAdjust="spacingAndGlyphs" stroke="#333333" stroke-width="0.2" >-1)</text>
<rect x="0" y="194" width="917" height="370" fill="#ffffff" />
<rect x="0" y="194" width="23" height="370" fill="#e6e6e6" />
<line x1="23" y1="251.3" x2="917" y2="251.3" stroke="#dadada" stroke-width="1" />
<line x1="0" y1="251.3" x2="23" y2="251.3" stroke="#c6c6c6" stroke-width="1" />
<line x1="23" y1="279.22" x2="917" y2="279.22" stroke="#dadada" stroke-width="1" />
<line x1="0" y1="279.22" x2="23" y2="279.22" stroke="#c6c6c6" stroke-width="1" />
<line x1="23" y1="307.14" x2="917" y2="307.14" stroke="#dadada" stroke-width="1" />
<line x1="0" y1="307.14" x2="23" y2="307.14" stroke="#c6c6c6" stroke-width="1" />
<line x1="23" y1="335.06" x2="917" y2="335.06" stroke="#dadada" stroke-width="1" />
<line x1="0" y1="335.06" x2="23" y2="335.06" stroke="#c6c6c6" stroke-width="1" />
<line x1="23" y1="362.98" x2="917" y2="362.98" stroke="#dadada" stroke-width="1" />
<line x1="0" y1="362.98" x2="23" y2="362.98" stroke="#c6c6c6" stroke-width="1" />
<line x1="23" y1="390.90000000000003" x2="917" y2="390.90000000000003" stroke="#dadada" stroke-width="1" />
<line x1="0" y1="390.90000000000003" x2="23" y2="390.90000000000003" stroke="#c6c6c6" stroke-width="1" />
<line x1="23" y1="418.82000000000005" x2="917" y2="418.82000000000005" stroke="#dadada" stroke-width="1" />
<line x1="0" y1="418.82000000000005" x2="23" y2="418.82000000000005" stroke="#c6c6c6" stroke-width="1" />
<line x1="23" y1="446.74" x2="917" y2="446.74" stroke="#dadada" stroke-width="1" />
<line x1="0" y1="446.74" x2="23" y2="446.74" stroke="#c6c6c6" stroke-width="1" />
<line x1="23" y1="474.66" x2="917" y2="474.66" stroke="#dadada" stroke-width="1" />
<line x1="0" y1="474.66" x2="23" y2="474.66" stroke="#c6c6c6" stroke-width="1" />
<line x1="23" y1="502.58000000000004" x2="917" y2="502.58000000000004" stroke="#dadada" stroke-width="1" />
<line x1="0" y1="502.58000000000004" x2="23" y2="502.58000000000004" stroke="#c6c6c6" stroke-width="1" />
<line x1="23" y1="530.5" x2="917" y2="530.5" stroke="#dadada" stroke-width="1" />
<line x1="0" y1="530.5" x2="23" y2="530.5" stroke="#c6c6c6" stroke-width="1" />
<line x1="23" y1="558.4200000000001" x2="917" y2="558.4200000000001" stroke="#dadada" stroke-width="1" />
<line x1="0" y1="558.4200000000001" x2="23" y2="558.4200000000001" stroke="#c6c6c6" stroke-width="1" />
<line x1="80.9" y1="194" x2="80.9" y2="564" stroke="#dadada" stroke-width="1" />
<line x1="80.9" y1="177" x2="80.9" y2="194" stroke="#c6c6c6" stroke-width="1" />
<line x1="393.2" y1="194" x2="393.2" y2="564" stroke="#dadada" stroke-width="1" />
<line x1="393.2" y1="177" x2="393.2" y2="194" stroke="#c6c6c6" stroke-width="1" />
<line x1="559.6" y1="194" x2="559.6" y2="564" stroke="#dadada" stroke-width="1" />
<line x1="559.6" y1="177" x2="559.6" y2="194" stroke="#c6c6c6" stroke-width="1" />
<line x1="738.8" y1="194" x2="738.8" y2="564" stroke="#dadada" stroke-width="1" />
<line x1="738.8" y1="177" x2="738.8" y2="194" stroke="#c6c6c6" stroke-width="1" />
<line x1="837.7" y1="194" x2="837.7" y2="564" stroke="#dadada" stroke-width="1" />
<line x1="837.7" y1="177" x2="837.7" y2="194" stroke="#c6c6c6" stroke-width="1" />
<line x1="894.8" y1="194" x2="894.8" y2="564" stroke="#dadada" stroke-width="1" />
<line x1="894.8" y1="177" x2="894.8" y2="194" stroke="#c6c6c6" stroke-width="1" />
<line x1="23.3" y1="177" x2="23.3" y2="564" stroke="#bebebe" stroke-width="1.2" />
<line x1="0" y1="194.3" x2="917" y2="194.3" stroke="#b5b5b5" stroke-width="1.4" />
<path d="M20.5,181.3 V191.6 H10.4 Z" fill="#bfbfbf" stroke="none" stroke-width="1" />
<text x="52.45" y="189.7" font-size="11" fill="#444444" font-weight="normal" text-anchor="middle" stroke="#444444" stroke-width="0.25">A</text>
<text x="237.55" y="189.7" font-size="11" fill="#444444" font-weight="normal" text-anchor="middle" stroke="#444444" stroke-width="0.25">B</text>
<text x="476.9" y="189.7" font-size="11" fill="#444444" font-weight="normal" text-anchor="middle" stroke="#444444" stroke-width="0.25">C</text>
<text x="649.7" y="189.7" font-size="11" fill="#444444" font-weight="normal" text-anchor="middle" stroke="#444444" stroke-width="0.25">D</text>
<text x="788.75" y="189.7" font-size="11" fill="#444444" font-weight="normal" text-anchor="middle" stroke="#444444" stroke-width="0.25">E</text>
<text x="866.75" y="189.7" font-size="11" fill="#444444" font-weight="normal" text-anchor="middle" stroke="#444444" stroke-width="0.25">F</text>
<text x="12.2" y="247.3" font-size="11.8" fill="#444444" font-weight="normal" text-anchor="middle" stroke="#444444" stroke-width="0.2">1</text>
<text x="12.2" y="273.22" font-size="11.8" fill="#444444" font-weight="normal" text-anchor="middle" stroke="#444444" stroke-width="0.2">2</text>
<text x="12.2" y="301.14" font-size="11.8" fill="#444444" font-weight="normal" text-anchor="middle" stroke="#444444" stroke-width="0.2">3</text>
<text x="12.2" y="329.06" font-size="11.8" fill="#444444" font-weight="normal" text-anchor="middle" stroke="#444444" stroke-width="0.2">4</text>
<text x="12.2" y="356.98" font-size="11.8" fill="#444444" font-weight="normal" text-anchor="middle" stroke="#444444" stroke-width="0.2">5</text>
<text x="12.2" y="384.90000000000003" font-size="11.8" fill="#444444" font-weight="normal" text-anchor="middle" stroke="#444444" stroke-width="0.2">6</text>
<text x="12.2" y="412.82000000000005" font-size="11.8" fill="#444444" font-weight="normal" text-anchor="middle" stroke="#444444" stroke-width="0.2">7</text>
<text x="12.2" y="440.74" font-size="11.8" fill="#444444" font-weight="normal" text-anchor="middle" stroke="#444444" stroke-width="0.2">8</text>
<text x="12.2" y="468.66" font-size="11.8" fill="#444444" font-weight="normal" text-anchor="middle" stroke="#444444" stroke-width="0.2">9</text>
<text x="12.2" y="496.58000000000004" font-size="11.8" fill="#444444" font-weight="normal" text-anchor="middle" stroke="#444444" stroke-width="0.2">10</text>
<text x="12.2" y="524.5" font-size="11.8" fill="#444444" font-weight="normal" text-anchor="middle" stroke="#444444" stroke-width="0.2">11</text>
<text x="12.2" y="552.4200000000001" font-size="11.8" fill="#444444" font-weight="normal" text-anchor="middle" stroke="#444444" stroke-width="0.2">12</text>
<rect x="83.2" y="252.9" width="308.1" height="24.4" fill="#d8e1f2" />
<rect x="80.6" y="250.9" width="313" height="29.8" fill="none" stroke="#ffffff" stroke-width="2.2"/>
<line x1="80.5" y1="250.9" x2="393.5" y2="250.9" stroke="#3d70c8" stroke-width="1.8" />
<line x1="80.5" y1="279.7" x2="393.5" y2="279.7" stroke="#3d70c8" stroke-width="1.9" />
<line x1="80.6" y1="253.3" x2="80.6" y2="277" stroke="#3d70c8" stroke-width="1.9" />
<line x1="392.95" y1="253.3" x2="392.95" y2="277" stroke="#5a86d2" stroke-width="1.9" />
<rect x="78.4" y="248.7" width="5" height="5" fill="#3d70c8" />
<rect x="390.5" y="248.7" width="5" height="5" fill="#3d70c8" />
<rect x="78.4" y="277.2" width="5" height="5" fill="#3d70c8" />
<rect x="390.5" y="277.2" width="5" height="5" fill="#3d70c8" />
<text x="25.62" y="231.2" font-size="17.3" fill="#1a1a1a" font-weight="normal" textLength="24.36" lengthAdjust="spacingAndGlyphs" stroke="#1a1a1a" stroke-width="0.12" >stt</text>
<text x="188.92" y="230.7" font-size="17.3" fill="#1a1a1a" font-weight="normal" textLength="97.36" lengthAdjust="spacingAndGlyphs" stroke="#1a1a1a" stroke-width="0.12" >HỌ VÀ TÊN</text>
<text x="463.12" y="230.7" font-size="17.3" fill="#1a1a1a" font-weight="normal" textLength="28.36" lengthAdjust="spacingAndGlyphs" stroke="#1a1a1a" stroke-width="0.12" >HỌ</text>
<text x="631.22" y="230.7" font-size="17.3" fill="#1a1a1a" font-weight="normal" textLength="35.76" lengthAdjust="spacingAndGlyphs" stroke="#1a1a1a" stroke-width="0.12" >TÊN</text>
<text x="47.32" y="273.3" font-size="17.3" fill="#1a1a1a" font-weight="normal" textLength="11.26" lengthAdjust="spacingAndGlyphs" stroke="#1a1a1a" stroke-width="0.12" >1</text>
<text x="84.12" y="273.3" font-size="17.3" fill="#1a1a1a" font-weight="normal" textLength="190.66" lengthAdjust="spacingAndGlyphs" stroke="#1a1a1a" stroke-width="0.12" >Nguyễn Phương Sanh</text>
<text x="47.32" y="301.2" font-size="17.3" fill="#1a1a1a" font-weight="normal" textLength="11.26" lengthAdjust="spacingAndGlyphs" stroke="#1a1a1a" stroke-width="0.12" >2</text>
<text x="84.12" y="301.2" font-size="17.3" fill="#1a1a1a" font-weight="normal" textLength="167.76" lengthAdjust="spacingAndGlyphs" stroke="#1a1a1a" stroke-width="0.12" >Trần Minh Phương</text>
<text x="47.32" y="329.1" font-size="17.3" fill="#1a1a1a" font-weight="normal" textLength="11.26" lengthAdjust="spacingAndGlyphs" stroke="#1a1a1a" stroke-width="0.12" >3</text>
<text x="84.12" y="329.1" font-size="17.3" fill="#1a1a1a" font-weight="normal" textLength="170.26" lengthAdjust="spacingAndGlyphs" stroke="#1a1a1a" stroke-width="0.12" >Phan Thị Bích Ngọc</text>
<text x="47.32" y="357.0" font-size="17.3" fill="#1a1a1a" font-weight="normal" textLength="11.26" lengthAdjust="spacingAndGlyphs" stroke="#1a1a1a" stroke-width="0.12" >4</text>
<text x="84.12" y="357.0" font-size="17.3" fill="#1a1a1a" font-weight="normal" textLength="101.56" lengthAdjust="spacingAndGlyphs" stroke="#1a1a1a" stroke-width="0.12" >Ngô Văn Kỳ</text>
<text x="395.44" y="273.2" font-size="12.6" fill="#f0353b" font-weight="normal" textLength="163.31" lengthAdjust="spacingAndGlyphs" >=LEFT(B2,FIND(" ",B2,1)-1)</text>
<ellipse cx="316" cy="149.5" rx="143.2" ry="47.5" fill="none" stroke="#e5161e" stroke-width="3.9"/>
</svg>
</body></html>
